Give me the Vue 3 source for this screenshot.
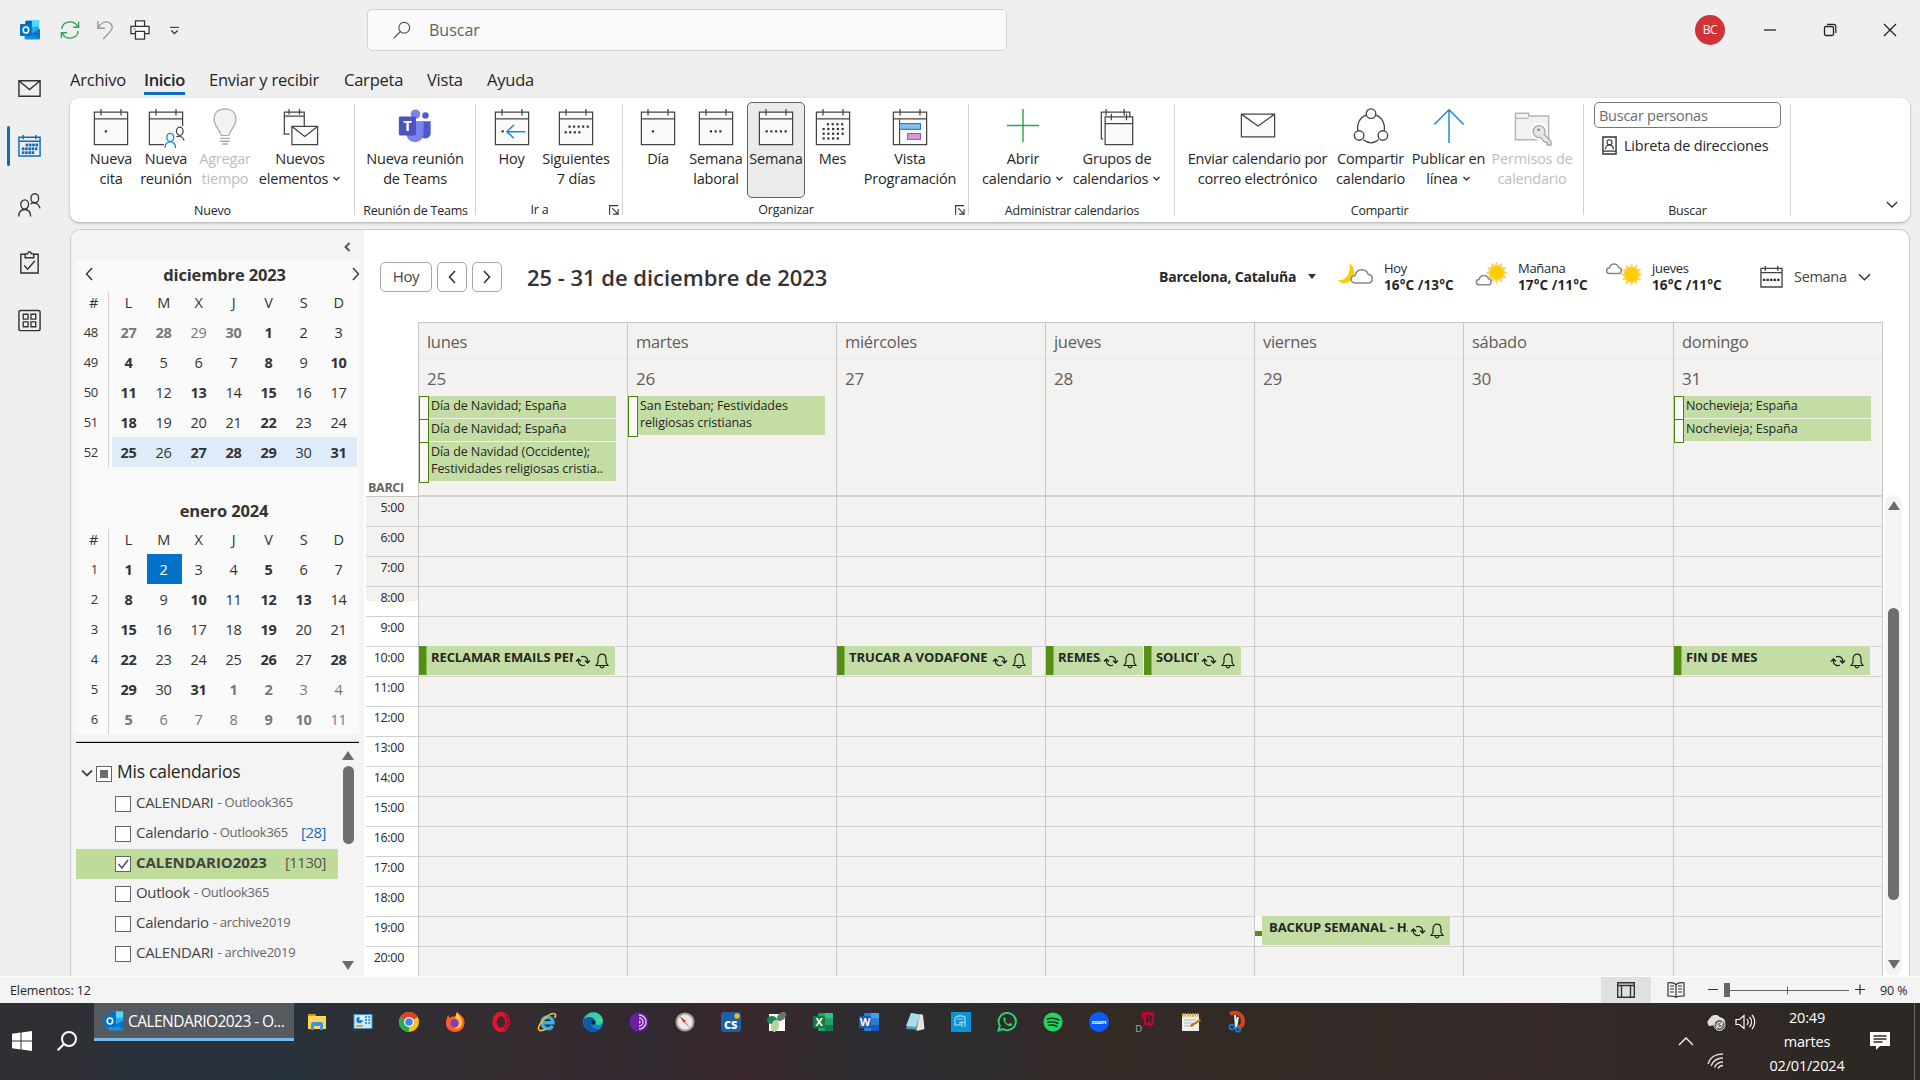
<template>
  <div class="screen">
    <header class="titlebar">
      <div class="quick">
        <svg class="q-logo" viewBox="0 0 22 22" v-html="icons.outlook"></svg>
        <svg class="q-sync" viewBox="0 0 22 22" v-html="icons.sync"></svg>
        <svg class="q-undo" viewBox="0 0 20 22" v-html="icons.undo"></svg>
        <svg class="q-print" viewBox="0 0 22 22" v-html="icons.print"></svg>
        <svg class="q-more" viewBox="0 0 10 10" v-html="icons.more"></svg>
      </div>
      <div class="search">
        <svg viewBox="0 0 20 20" v-html="icons.search"></svg>
        <span>Buscar</span>
      </div>
      <div class="window">
        <span class="avatar">BC</span>
        <svg v-for="w in ['min', 'restore', 'close']" :key="w" viewBox="0 0 14 14" v-html="icons[w]"></svg>
      </div>
    </header>

    <div class="body">
      <nav class="rail">
        <div v-for="r in rail" :key="r" class="rail-item" :class="{ active: r === 'railCal' }">
          <svg viewBox="0 0 26 26" v-html="icons[r]"></svg>
        </div>
      </nav>

      <div class="content">
        <div class="tabs">
          <span v-for="t in tabs" :key="t.name" :class="{ active: t.active }" :style="{ width: t.w + 'px' }">{{ t.name }}</span>
        </div>

        <div class="ribbon">
          <section v-for="g in groups" :key="g.label" class="group" :style="{ width: g.w + 'px' }">
            <div class="items" :style="{ paddingLeft: g.pad + 'px' }">
              <div
                v-for="b in g.items"
                :key="b.icon"
                class="rbtn"
                :class="{ on: b.on, off: b.off }"
                :style="{ width: b.w + 'px' }"
              >
                <svg viewBox="0 0 40 40" v-html="icons[b.icon]"></svg>
                <span>{{ b.l1 }}</span>
                <span v-if="b.l2">{{ b.l2 }}<svg v-if="b.drop" class="drop" viewBox="0 0 8 6" v-html="icons.drop"></svg></span>
              </div>
            </div>
            <div class="glabel" :class="{ shifted: g.launcher }">{{ g.label }}</div>
            <svg v-if="g.launcher" class="launcher" viewBox="0 0 11 11" v-html="icons.launcher"></svg>
          </section>
          <section class="group find">
            <div class="people">Buscar personas</div>
            <div class="book"><svg viewBox="0 0 16 20" v-html="icons.address"></svg><span>Libreta de direcciones</span></div>
            <div class="glabel">Buscar</div>
          </section>
          <svg class="collapse" viewBox="0 0 14 8" v-html="icons.chevDown"></svg>
        </div>

        <main class="panel">
          <aside class="side">
            <div class="side-top"><svg viewBox="0 0 8 10"><path d="M6.500 1L2.500 5l4 4" fill="none" stroke="#555" stroke-width="2" /></svg></div>
            <div class="minis">
              <div v-for="(m, mi) in months" :key="m.title" class="mini" :class="'m' + mi">
                <div class="mtitle">
                  <svg v-if="!mi" viewBox="0 0 8 14"><path d="M7 1L1.500 7 7 13" fill="none" stroke="#333" stroke-width="1.400" /></svg>
                  <b>{{ m.title }}</b>
                  <svg v-if="!mi" viewBox="0 0 8 14"><path d="M2 1l5.500 6L2 13" fill="none" stroke="#333" stroke-width="1.400" /></svg>
                </div>
                <div class="mrow mhead">
                  <i>#</i><span v-for="d in 'LMXJVSD'" :key="d">{{ d }}</span>
                </div>
                <div v-for="(w, wi) in m.weeks" :key="wi" class="mrow" :class="{ sel: w.sel }">
                  <i>{{ w.n }}</i>
                  <span v-for="(d, di) in w.days" :key="di" :class="dayClass(d)">{{ d.replace(/[*~!]/g, '') }}</span>
                </div>
              </div>
            </div>
            <div class="mycals">
              <div class="tree">
                <div class="root">
                  <svg viewBox="0 0 12 8"><path d="M1 1.500l5 5 5-5" fill="none" stroke="#444" stroke-width="1.800" /></svg>
                  <i class="box mixed"></i>
                  <span>Mis calendarios</span>
                </div>
                <div v-for="(c, ci) in calendars" :key="ci" class="cal" :class="{ chosen: c.chosen }">
                  <i class="box"><svg v-if="c.chosen" viewBox="0 0 14 14"><path d="M2.500 7l3.500 4 6-8" fill="none" stroke="#555" stroke-width="1.600" /></svg></i>
                  <span class="cname">{{ c.name }}</span>
                  <span v-if="c.src" class="csrc">- {{ c.src }}</span>
                  <span v-if="c.count" class="ccount">[{{ c.count }}]</span>
                </div>
              </div>
              <div class="sbar small"><i class="up"></i><b></b><i class="down"></i></div>
            </div>
          </aside>

          <div class="week">
            <div class="whead">
              <span class="btn today">Hoy</span>
              <span class="btn"><svg viewBox="0 0 8 14"><path d="M7 1L1.500 7 7 13" fill="none" stroke="#333" stroke-width="1.600" /></svg></span>
              <span class="btn"><svg viewBox="0 0 8 14"><path d="M1 1l5.500 6L1 13" fill="none" stroke="#333" stroke-width="1.600" /></svg></span>
              <h1>25 - 31 de diciembre de 2023</h1>
              <b class="city">Barcelona, Cataluña</b>
              <i class="caret"></i>
              <div v-for="f in forecast" :key="f.day" class="fc">
                <svg viewBox="0 0 40 28" v-html="icons[f.icon]"></svg>
                <div><span>{{ f.day }}</span><b>{{ f.temp }}</b></div>
              </div>
              <div class="viewsel">
                <svg class="vcal" viewBox="0 0 24 24" v-html="icons.viewCal"></svg>
                <span>Semana</span>
                <svg class="vdown" viewBox="0 0 14 8" v-html="icons.chevDown"></svg>
              </div>
            </div>

            <div class="calendar">
              <div class="gutter">
                <div class="tz">BARCI</div>
                <div v-for="h in hours" :key="h" class="hour" :class="{ night: h < 8, half: h === 8 }">{{ h }}:00</div>
              </div>
              <div class="days">
                <div v-for="d in days" :key="d.num" class="day">
                  <div class="dname">{{ d.name }}</div>
                  <div class="dall">
                    <div class="dnum">{{ d.num }}</div>
                    <div v-for="(a, ai) in d.allday" :key="ai" class="allday"><span v-for="line in a" :key="line">{{ line }}</span></div>
                  </div>
                  <div class="slots">
                    <div v-for="h in hours" :key="h" class="slot"></div>
                    <div
                      v-for="e in d.events"
                      :key="e.text"
                      class="event"
                      :class="{ tentative: e.short }"
                      :style="{ top: (e.at - 5) * 30 - 1 + 'px', left: e.left + 'px', width: e.w + 'px' }"
                    >
                      <b :style="{ width: e.tw + 'px' }">{{ e.text }}</b>
                      <svg class="rec" viewBox="0 0 14 14" v-html="icons.recur"></svg>
                      <svg class="bell" viewBox="0 0 14 16" v-html="icons.bell"></svg>
                    </div>
                  </div>
                </div>
              </div>
              <div class="sbar big"><i class="up"></i><b></b><i class="down"></i></div>
            </div>
          </div>
        </main>
      </div>
    </div>

    <div class="status">
      <span class="count">Elementos: 12</span>
      <span class="vbtn on"><svg viewBox="0 0 18 16" v-html="icons.normalView"></svg></span>
      <span class="vbtn"><svg viewBox="0 0 18 16" v-html="icons.readView"></svg></span>
      <svg class="zoom" viewBox="0 0 156 18" v-html="icons.slider"></svg>
      <span class="pct">90 %</span>
    </div>

    <footer class="taskbar">
      <svg class="start" viewBox="0 0 20 20" v-html="icons.windows"></svg>
      <svg class="tsearch" viewBox="0 0 20 20" v-html="icons.tsearch"></svg>
      <div class="apps">
        <div class="running"><svg viewBox="0 0 22 22" v-html="icons.outlook"></svg><span>CALENDARIO2023 - O...</span></div>
        <div v-for="a in apps" :key="a" class="app"><svg viewBox="0 0 20 20" v-html="icons[a]"></svg></div>
      </div>
      <svg class="tchev" viewBox="0 0 16 9"><path d="M1 8l7-7 7 7" fill="none" stroke="#fff" stroke-width="1.300" /></svg>
      <div class="tray">
        <svg viewBox="0 0 20 20" v-html="icons.cloud"></svg>
        <svg viewBox="0 0 20 20" v-html="icons.speaker"></svg>
        <svg viewBox="0 0 20 20" v-html="icons.wifi"></svg>
      </div>
      <div class="clock"><span>20:49</span><span>martes</span><span>02/01/2024</span></div>
      <svg class="notif" viewBox="0 0 22 20" v-html="icons.notif"></svg>
      <i class="peek"></i>
    </footer>
  </div>
</template>

<script setup>
// calendar page used by most ribbon icons
const page = '<path d="M2.500 5.500h35v34h-35z" fill="#fafafa"/><path d="M2.500 5.500h35v34h-35zM2.500 12.500h35M9.500 2v7M30.500 2v7" fill="none" stroke="#444" stroke-width="1.300"/>'

const dots = (list) => list.map(([x, y]) => `<rect x="${x}" y="${y}" width="2.300" height="2.300" fill="#333"/>`).join('')
const row = (n, x, y, step = 5) => Array.from({ length: n }, (_, i) => [x + i * step, y])

const person = (x, y, s, c) => `<g transform="translate(${x} ${y}) scale(${s})" fill="none" stroke="${c}" stroke-width="${1.4 / s}"><ellipse cx="0" cy="0" rx="4.200" ry="5"/><path d="M-6.500 13c0-5 2.500-7.500 6.500-7.500s6.500 2.500 6.500 7.500"/></g>`

const office = (dark, mid, light, letter) => `<rect x="5" y="1" width="15" height="18" rx="1" fill="${mid}"/><path d="M12 1h7a1 1 0 0 1 1 1v4h-8z" fill="${light}"/><path d="M12 13h8v5a1 1 0 0 1-1 1h-7z" fill="${dark}"/><rect x="0" y="4" width="12" height="12" rx="1" fill="${dark}"/><text x="6" y="14" font-size="11" font-weight="700" text-anchor="middle" fill="#fff">${letter}</text>`

const sun = (cx, cy) => {
  const pts = Array.from({ length: 24 }, (_, i) => {
    const r = i % 2 ? 8 : 12
    const a = (i * Math.PI) / 12
    return `${(cx + r * Math.cos(a)).toFixed(1)},${(cy + r * Math.sin(a)).toFixed(1)}`
  }).join(' ')
  return `<polygon points="${pts}" fill="#f8d568"/><circle cx="${cx}" cy="${cy}" r="7.300" fill="#fc0"/>`
}
const puff = (x, y, s) => `<path transform="translate(${x} ${y}) scale(${s})" d="M5 14a4 4 0 0 1 0-8C6 2 9 0 12 0s6 2 7 5c5 0 6 9 0 9z" fill="#fff" stroke="#888" stroke-width="${1.6 / s}"/>`

const icons = {
  outlook: '<rect x="6" y="0.500" width="15" height="15" rx="1" fill="#28a8ea"/><path d="M13 .5h8v7h-8z" fill="#50d9ff"/><path d="M6 1h7v7H6z" fill="#0364b8"/><path d="M5 10l8 5 9-5v10a1.500 1.500 0 0 1-1.500 1.500h-14A1.500 1.500 0 0 1 5 20z" fill="#1490df"/><path d="M22 10v10.500L12 15z" fill="#0a5ca8" opacity=".55"/><rect x="0" y="4.500" width="13" height="13" rx="1" fill="#0072c6"/><ellipse cx="6.500" cy="11" rx="3" ry="3.300" fill="none" stroke="#fff" stroke-width="1.800"/>',
  sync: '<path d="M2 10C2 5 6 2 11 2c4 0 7 2 8.500 5.500M20 12c0 5-4 8-9 8-4 0-7-2-8.500-5.500M20.500 2v6h-6M1.500 20v-6h6" fill="none" stroke="#2ea44f" stroke-width="1.500"/>',
  undo: '<path d="M2 1v8h8M2 9C5 3 10 1 14 2.500c5 2 5 7 2 10L8 21" fill="none" stroke="#9a9a9a" stroke-width="1.500"/>',
  print: '<path d="M6 7V1h10v6M6 15H1V7h20v8h-5M6 12.500h10V21H6z" fill="#fafafa" stroke="#333" stroke-width="1.400"/><path d="M4 10h2" stroke="#333"/>',
  more: '<path d="M0 1.500h10" stroke="#333" stroke-width="1.200"/><path d="M1.500 5L5 8.500 8.500 5" fill="none" stroke="#333" stroke-width="1.400"/>',
  search: '<circle cx="12.500" cy="7.500" r="6" fill="none" stroke="#555" stroke-width="1.300"/><path d="M8 12l-7 7" stroke="#555" stroke-width="1.400"/>',
  min: '<path d="M1 7h12" stroke="#222" stroke-width="1.300"/>',
  restore: '<rect x="1.500" y="3.500" width="9" height="9" rx="1.500" fill="none" stroke="#222" stroke-width="1.300"/><path d="M4 1.300h6.500a2.300 2.300 0 0 1 2.300 2.300V10" fill="none" stroke="#222" stroke-width="1.200"/>',
  close: '<path d="M1 1l12 12M13 1L1 13" stroke="#222" stroke-width="1.300"/>',
  railMail: '<path d="M2 5h22v16H2zM2 5l11 9 11-9" fill="none" stroke="#333" stroke-width="1.500"/>',
  railCal: '<path d="M2 4.500h22V24H2zM2 8.500h22M6.500 2v4.500M19.500 2v4.500" fill="none" stroke="#0f6cbd" stroke-width="1.500"/>' + [...row(4, 9, 11, 3.4), ...row(5, 5, 15, 3.4), ...row(4, 5, 19, 3.4)].map(([x, y]) => `<rect x="${x}" y="${y}" width="2.700" height="2.900" fill="#0f6cbd"/>`).join(''),
  railPeople: person(8, 13, 0.95, '#333') + '<g fill="none" stroke="#333" stroke-width="1.400"><ellipse cx="18.500" cy="6.500" rx="4" ry="4.700"/><path d="M14 12.500c2-1.800 8-2 10 4.500"/></g>',
  railTask: '<path d="M8 4.500H4V24h18V4.500h-4M8.500 8V4h2.500c.5-3 3.500-3 4 0h2.500v4z" fill="none" stroke="#333" stroke-width="1.500"/><path d="M7.500 16l3.500 4 7.500-8.500" fill="none" stroke="#333" stroke-width="1.500"/>',
  railApps: '<rect x="2" y="2.500" width="22" height="21" rx="2" fill="none" stroke="#333" stroke-width="1.500"/><path d="M6.500 6.500h5v5h-5zM14.500 6.500h5v5h-5zM6.500 14.500h5v5h-5zM14.500 14.500h5v5h-5z" fill="none" stroke="#333" stroke-width="1.400"/>',
  cita: page + dots([[13.5, 24.5]]),
  reunion: '<path d="M2.500 5.500h35V20L20 39.500H2.500z" fill="#fafafa"/><path d="M18 39.500H2.500v-34h35V20M2.500 12.500h35M9.500 2v7M30.500 2v7" fill="none" stroke="#444" stroke-width="1.300"/>' + person(24.5, 32, 0.85, '#1a86d0') + '<g fill="none" stroke="#444" stroke-width="1.300"><ellipse cx="34.500" cy="25.500" rx="3.500" ry="4.300"/><path d="M31 31.500c3-1.500 7-1 8 4"/></g>',
  tiempo: '<path d="M16 30C15 24 8.500 21 8.500 13 8.500 6 13 2 20 2s11.500 4 11.500 11c0 8-6.500 11-7.500 17z" fill="#f3f2f1" stroke="#aaa" stroke-width="1.300"/><path d="M15 33h10M15 36h10M17 39h6" stroke="#aaa" stroke-width="1.500"/>',
  elementos: '<path d="M9 28.500H3.500v-23h21V20M3.500 9.500h21M8.500 2v6M19.500 2v6" fill="#fafafa" stroke="#444" stroke-width="1.300"/><path d="M11.500 20.500h27v19h-27zM11.500 20.500L25 31l13.500-10.500" fill="#fafafa" stroke="#444" stroke-width="1.300"/>',
  teams: '<circle cx="20.500" cy="7.500" r="5" fill="#7b83eb"/><circle cx="31" cy="9" r="3.400" fill="#5059c9"/><path d="M26 15h10.500v12c0 6-7 8-10.500 4z" fill="#5059c9"/><path d="M11 15h18v13c0 12-18 12-18 0z" fill="#7b83eb"/><rect x="3" y="10" width="18" height="20" rx="1.500" fill="#4b53bc"/><text x="12" y="25.500" font-size="15.500" font-weight="700" text-anchor="middle" fill="#fff">T</text>',
  hoy: page + dots([[9, 24.5]]) + '<path d="M34 26H15M22 19l-7.500 7 7.500 7" fill="none" stroke="#1a86d0" stroke-width="1.500"/>',
  siguientes: page + dots([...row(5, 12, 19.5, 4.8), ...row(4, 8, 25.5, 4.8)]),
  laboral: page + dots(row(3, 13.5, 24.5, 5)),
  semana: page + dots(row(5, 9, 24.5, 5)),
  mes: page + dots([...row(4, 13.5, 17, 5), ...row(5, 9, 22, 5), ...row(5, 9, 27, 5), ...row(4, 9, 32, 5)]),
  programacion: page + '<path d="M9 12.500v27" stroke="#444" stroke-width="1.200"/><rect x="9" y="17.500" width="22" height="6" fill="#83beec" stroke="#0f6cbd"/><rect x="17.500" y="28" width="13.500" height="6" fill="#d59ed7" stroke="#9b3fa5"/>',
  abrir: '<path d="M20 2v35M3 19.500h34" stroke="#2ea44f" stroke-width="1.500"/>',
  grupos: '<path d="M5.500 33.500h-2v-28h30v5M8.500 2v7M27.500 2v7" fill="none" stroke="#444" stroke-width="1.300"/><path d="M7.500 10.500h29v29h-29z" fill="#fafafa"/><path d="M7.500 10.500h29v29h-29zM7.500 17.500h29M14 7v7M30 7v7" fill="none" stroke="#444" stroke-width="1.300"/>',
  enviar: '<path d="M2.500 7.500h35v24h-35zM2.500 7.500L20 20 37.500 7.500" fill="#fafafa" stroke="#444" stroke-width="1.300"/>',
  compartir: '<g fill="none" stroke="#444" stroke-width="1.400"><path d="M15 8.500C8 11 5 18 6 25M25 8.500C32 11 35 18 34 25M12 34.500c5 4 11 4 16 0"/><circle cx="20" cy="7" r="5"/><circle cx="7.500" cy="30" r="5"/><circle cx="32.500" cy="30" r="5"/></g>',
  publicar: '<path d="M20 38V3M4.500 18.500L20 3l15.500 15.500" fill="none" stroke="#1a86d0" stroke-width="1.500"/>',
  permisos: '<path d="M2.500 6.500h14v3h21v25h-35zM2.500 12h14" fill="#f3f2f1" stroke="#b5b5b5" stroke-width="1.500"/><path d="M24 20a6.300 6.300 0 1 1 5 11l9 8h-6l-6-7a6.300 6.300 0 0 1-2-12z" fill="#f3f2f1" stroke="#fff" stroke-width="4"/><path d="M33 29l7 7v4h-4v-3h-3l-4-5a6.300 6.300 0 1 1 4-3z" fill="#e5e5e5" stroke="#a5a5a5" stroke-width="1.400"/><circle cx="27" cy="24" r="1.400" fill="#888"/>',
  drop: '<path d="M1 1l3 3 3-3" fill="none" stroke="#333" stroke-width="1.400"/>',
  launcher: '<path d="M10 .7H.7v10M3.500 3.500l6 6M10 4.500V10H4.500" fill="none" stroke="#333" stroke-width="1.200"/>',
  address: '<path d="M1 1h14v18H1zM1 16h14" fill="none" stroke="#333" stroke-width="1.500"/><circle cx="8" cy="6.500" r="2.700" fill="none" stroke="#333" stroke-width="1.200"/><path d="M3.800 14c0-6 8.400-6 8.400 0" fill="none" stroke="#333" stroke-width="1.200"/>',
  chevDown: '<path d="M1 1l6 6 6-6" fill="none" stroke="#333" stroke-width="1.500"/>',
  night: '<path d="M13 1c8 5 7 20-5 21-3 .3-6-1-7-3 9 1 14-8 12-18z" fill="#fc0"/>' + puff(14, 8, 1),
  morning: sun(27, 11) + puff(5, 14, 0.7),
  sunny: sun(28, 13) + puff(1, 2, 0.7),
  viewCal: '<path d="M1 3.500h22V23H1zM1 8h22M5.500 1v5M18.500 1v5" fill="none" stroke="#444" stroke-width="1.400"/><path d="M3 15.500h18" stroke="#333" stroke-width="2.500" stroke-dasharray="2.600 1.100"/>',
  recur: '<path d="M11.500 8V6c0-3-4-4.500-6.500-3M2.500 6v2c0 3 4 4.500 6.500 3M9 6.500L11.500 9 14 6.500M0 7.500L2.500 5 5 7.500" fill="none" stroke="#222" stroke-width="1.300"/>',
  bell: '<path d="M1 12.500l2-3V6c0-6.500 8-6.500 8 0v3.500l2 3zM5 13c.5 2.500 3.500 2.500 4 0" fill="none" stroke="#222" stroke-width="1.200"/>',
  normalView: '<path d="M.7.7h16.600v14.600H.7zM.7 3.500h16.600M4.500 3.500v12M13.500 3.500v12" fill="none" stroke="#333" stroke-width="1.400"/>',
  readView: '<path d="M9 2.500C7 .5 4 .5 1 .8v13c3 0 6 0 8 1.500 2-1.500 5-1.500 8-1.500V.8c-3-.3-6-.3-8 1.700zV15M3 4h4M3 7h4M3 10h4M11 4h4M11 7h4M11 10h4" fill="none" stroke="#333" stroke-width="1.200"/>',
  slider: '<path d="M0 8.500h10M147 8.500h10M152 3.500v10" stroke="#333" stroke-width="1.200"/><path d="M18 9.500h123M79.500 5.500v8" stroke="#666" stroke-width="1"/><rect x="16" y="2" width="6" height="14" fill="#666"/>',
  windows: '<path d="M0 2.800l8.500-1.200v8H0zM9.500 1.500L20 0v9.600H9.500zM0 10.500h8.500v8L0 17.300zM9.500 10.500H20V20L9.500 18.600z" fill="#fff"/>',
  tsearch: '<circle cx="12" cy="8" r="7" fill="none" stroke="#fff" stroke-width="2"/><path d="M7 13l-6.300 6.300" stroke="#fff" stroke-width="2.200"/>',
  explorer: '<path d="M1 2h7l2 3H1z" fill="#d99a1c"/><path d="M1 4h18v13H1z" fill="#ffd65c"/><path d="M4 18v-6a2 2 0 0 1 2-2h8a2 2 0 0 1 2 2v6h-3v-4H7v4z" fill="#3f96e0"/>',
  control: '<rect x="1" y="2.500" width="18" height="14" fill="#cdeaff" stroke="#3d94d1"/><circle cx="6.500" cy="8" r="3.200" fill="#1f7fd0"/><path d="M6.500 8V4.500H10V8z" fill="#fff"/><path d="M3 14h7" stroke="#e2a23a" stroke-width="2"/><path d="M12 5h6M12 8h6M12 11h6" stroke="#2277bb" stroke-width="1.700" stroke-dasharray="2 1.200"/>',
  chrome: '<circle cx="10" cy="10" r="10" fill="#fbc116"/><path d="M10 10L1.300 5A10 10 0 0 1 18.700 5z" fill="#e33b2e"/><path d="M10 10L1.300 5A10 10 0 0 0 10 20z" fill="#2da94f"/><circle cx="10" cy="10" r="5" fill="#fff"/><circle cx="10" cy="10" r="3.800" fill="#4285f4"/>',
  firefox: '<path d="M3 3l2 3 3-2 2 1 2-5c4 3 8 6 7.500 11C19 17 15 20 10 20S1 16.500 1 11c0-3 1-5 2-8z" fill="#ff5a36"/><path d="M12 0c1 3 6 6 5 12-1 4-5 6-8 4 6 0 6-8 1-10z" fill="#ffcb2e"/><circle cx="9.500" cy="11" r="4" fill="#7c3fbf"/>',
  opera: '<ellipse cx="10" cy="10" rx="6.500" ry="8" fill="none" stroke="#e3122d" stroke-width="4.500"/><path d="M12 2c5 4 5 12 0 16 7-1 8-15 0-16z" fill="#a8041b"/>',
  ie: '<path d="M15.500 14c-3 4.500-10.500 3-10.500-4 0-6.500 11-6.500 11 .8H6" fill="none" stroke="#35b3ee" stroke-width="3.400"/><path d="M2 18C-1 14 13-1 18 2c1 1 .5 3-.5 4M2 18c2 1.500 5 0 7-1" fill="none" stroke="#f4bb21" stroke-width="1.700"/>',
  edge: '<circle cx="10" cy="10" r="10" fill="#1282d5"/><path d="M1 7C4-2 19-2 20 9c0 4-5 5-8 3 2-5-5-8-11-5z" fill="#3ad0a0"/><path d="M1 7c5-4 11-1 11 2-2-1-4 0-4 3 0 4 5 6 9 5-6 6-17 2-16-8z" fill="#0c59a4"/><circle cx="10.500" cy="10.500" r="2.200" fill="#16283a"/>',
  tor: '<circle cx="10" cy="10" r="9.500" fill="#6b1fa3"/><path d="M10 3a7 7 0 0 1 0 14M10 6a4 4 0 0 1 0 8M10 9a1 1 0 0 1 0 2" fill="none" stroke="#e4c6f5" stroke-width="1.400"/>',
  safari: '<circle cx="10" cy="10" r="8.500" fill="#eceae6" stroke="#a3a19d" stroke-width="2"/><path d="M4.500 4L11 9l-2 2z" fill="#d22"/><path d="M15 16.500L9 11l2-2z" fill="#b5b5b5"/>',
  cs: '<rect width="20" height="20" rx="3" fill="#1b62a8"/><circle cx="16" cy="4" r="2.700" fill="#f8b51c"/><text x="9.500" y="16.500" font-size="11" font-weight="800" text-anchor="middle" fill="#fff">CS</text>',
  plant: '<rect x="2" y="2" width="16" height="17" fill="#fff"/><ellipse cx="5" cy="8" rx="5" ry="4" fill="#168a5b"/><ellipse cx="14.500" cy="4.500" rx="5.500" ry="3.500" transform="rotate(-45 14.500 4.500)" fill="#66796c"/><ellipse cx="8" cy="14" rx="4" ry="6" transform="rotate(15 8 14)" fill="#b8d39a"/>',
  excel: office('#107c41', '#21a366', '#33c481', 'X'),
  word: office('#185abd', '#2b7cd3', '#41a5ee', 'W'),
  notes: '<path d="M6 1l12 2-1 15-16-1z" fill="#5f93a6"/><path d="M6 1l9 1.500L11 15 1 14z" fill="#a9dcea"/><path d="M15 2l3 1 1.500 14-8 2z" fill="#e9e4d8"/>',
  printer3d: '<rect width="20" height="20" fill="#0a94d6"/><path d="M4 10V7c0-3.500 9-4.500 10-1v9M4 7v6h5v-3h5v5M11 15v-5M6 7h6" fill="none" stroke="#a7dbf5" stroke-width="1.200"/>',
  whatsapp: '<path d="M1.500 18.500l1.300-4.700a8.600 8.600 0 1 1 3.400 3.300z" fill="none" stroke="#25d366" stroke-width="2"/><path d="M6.500 5.500c-1.500 3 3 9 7 8.800 1.500-.3 2-2 1.500-2.300l-2-1-1.300 1.300C9.500 11.500 8.500 10 8 8.800l1-1.300-1-2z" fill="#25d366"/>',
  spotify: '<circle cx="10" cy="10" r="9.500" fill="#1ed760"/><path d="M4.500 7c4-1.200 8-.7 11.500 1M5 10.300c3.500-1 7-.5 9.700 1M5.700 13.300c3-.7 5.500-.3 8 1" fill="none" stroke="#1c2620" stroke-width="1.600" stroke-linecap="round"/>',
  zoomApp: '<circle cx="10" cy="10" r="10" fill="#0b5cff"/><text x="10" y="12" font-size="5.800" font-weight="700" text-anchor="middle" fill="#fff">zoom</text>',
  dr: '<path d="M7 0h12v13h-3v4l-3-4H9V7H7z" fill="#b6082c"/><text x="13.500" y="11" font-size="11" font-weight="700" text-anchor="middle" fill="#30262a">R</text><text x="3.500" y="19.500" font-size="9.500" text-anchor="middle" fill="#aaa">D</text>',
  notepad: '<rect x="1" y="2" width="17" height="17" fill="#f0efeb"/><path d="M1 3h17" stroke="#d4a33a" stroke-width="3.500" stroke-dasharray="1.500 1"/><path d="M3 8h12M3 11h9M3 14h10" stroke="#b5b5b5"/><path d="M19.500 8l-10 6" stroke="#b97725" stroke-width="2.200"/>',
  snip: '<path d="M3 2c6-3 13 0 13 7 0 4-2 6-5 6" fill="none" stroke="#d2431d" stroke-width="4"/><path d="M8 3l1 12M11 5l-2 11" stroke="#eee" stroke-width="2"/><circle cx="5" cy="15" r="2.400" fill="none" stroke="#1978d4" stroke-width="1.800"/><circle cx="11" cy="17.500" r="2.200" fill="none" stroke="#1978d4" stroke-width="1.800"/>',
  cloud: '<path d="M4 14a4 4 0 0 1 0-7c1-4 8-5 10-1 4 0 5 3 4.500 5" fill="#ddd" stroke="#eee"/><circle cx="13.500" cy="13" r="5.500" fill="#6b6b6b" stroke="#eee" stroke-width=".8"/><path d="M10.800 13a2.700 2.700 0 0 1 5-1.200M16.200 9.800v2.500h-2.500M16.200 13.200a2.700 2.700 0 0 1-5 1.200M10.800 16.200v-2.400h2.400" fill="none" stroke="#fff" stroke-width="1"/>',
  speaker: '<path d="M1 7.500h3.500L9 3.500v13l-4.500-4H1zM12 7c1.500 2 1.500 4 0 6M14.500 5c2.700 3 2.700 7 0 10M17 3c3.600 4 3.600 10 0 14" fill="none" stroke="#fff" stroke-width="1.200"/>',
  wifi: '<path d="M2 13C4 6 9 3 17 3M5 15c2-5 5-8 12-8M8.500 16.500c1.500-3.500 4-5.500 8.500-5.500M12 17.500c1-2 2.500-3 5-3" fill="none" stroke="#ddd" stroke-width="1.400"/>',
  notif: '<path d="M1 1h20v14H11l-4 4v-4H1z" fill="#fff"/><path d="M4.500 5h13M4.500 8h13M4.500 11h9" stroke="#332b28" stroke-width="1.300"/>',
}

const rail = ['railMail', 'railCal', 'railPeople', 'railTask', 'railApps']

const tabs = [
  { name: 'Archivo', w: 74 },
  { name: 'Inicio', w: 65, active: true },
  { name: 'Enviar y recibir', w: 135 },
  { name: 'Carpeta', w: 83 },
  { name: 'Vista', w: 60 },
  { name: 'Ayuda', w: 60 },
]

const groups = [
  { label: 'Nuevo', w: 285, pad: 13, items: [
    { icon: 'cita', l1: 'Nueva', l2: 'cita', w: 56 },
    { icon: 'reunion', l1: 'Nueva', l2: 'reunión', w: 54 },
    { icon: 'tiempo', l1: 'Agregar', l2: 'tiempo', w: 64, off: true },
    { icon: 'elementos', l1: 'Nuevos', l2: 'elementos', w: 86, drop: true },
  ] },
  { label: 'Reunión de Teams', w: 121, pad: 0, items: [{ icon: 'teams', l1: 'Nueva reunión', l2: 'de Teams', w: 120 }] },
  { label: 'Ir a', w: 147, pad: 11, launcher: true, items: [
    { icon: 'hoy', l1: 'Hoy', w: 49 },
    { icon: 'siguientes', l1: 'Siguientes', l2: '7 días', w: 80 },
  ] },
  { label: 'Organizar', w: 346, pad: 8, launcher: true, items: [
    { icon: 'cita', l1: 'Día', w: 54 },
    { icon: 'laboral', l1: 'Semana', l2: 'laboral', w: 62 },
    { icon: 'semana', l1: 'Semana', w: 58, on: true },
    { icon: 'mes', l1: 'Mes', w: 55 },
    { icon: 'programacion', l1: 'Vista', l2: 'Programación', w: 100 },
  ] },
  { label: 'Administrar calendarios', w: 206, pad: 8, items: [
    { icon: 'abrir', l1: 'Abrir', l2: 'calendario', w: 92, drop: true },
    { icon: 'grupos', l1: 'Grupos de', l2: 'calendarios', w: 96, drop: true },
  ] },
  { label: 'Compartir', w: 409, pad: 7, items: [
    { icon: 'enviar', l1: 'Enviar calendario por', l2: 'correo electrónico', w: 151 },
    { icon: 'compartir', l1: 'Compartir', l2: 'calendario', w: 75 },
    { icon: 'publicar', l1: 'Publicar en', l2: 'línea', w: 81, drop: true },
    { icon: 'permisos', l1: 'Permisos de', l2: 'calendario', w: 86, off: true },
  ] },
]

// * = bold, ~ = other month, ! = today
const week = (n, days, sel) => ({ n, days: days.split(' '), sel })
const months = [
  { title: 'diciembre 2023', weeks: [
    week(48, '~*27 ~*28 ~29 ~*30 *1 2 3'),
    week(49, '*4 5 6 7 *8 9 *10'),
    week(50, '*11 12 *13 14 *15 16 17'),
    week(51, '*18 19 20 21 *22 23 24'),
    week(52, '*25 26 *27 *28 *29 30 *31', true),
  ] },
  { title: 'enero 2024', weeks: [
    week(1, '*1 !2 3 4 *5 6 7'),
    week(2, '*8 9 *10 11 *12 *13 14'),
    week(3, '*15 16 17 18 *19 20 21'),
    week(4, '*22 23 24 25 *26 27 *28'),
    week(5, '*29 30 *31 ~*1 ~*2 ~3 ~4'),
    week(6, '~*5 ~6 ~7 ~8 ~*9 ~*10 ~11'),
  ] },
]
const dayClass = (d) => ({ bold: d.includes('*'), other: d.includes('~'), now: d.includes('!') })

const calendars = [
  { name: 'CALENDARI', src: 'Outlook365' },
  { name: 'Calendario', src: 'Outlook365', count: 28 },
  { name: 'CALENDARIO2023', count: 1130, chosen: true },
  { name: 'Outlook', src: 'Outlook365' },
  { name: 'Calendario', src: 'archive2019' },
  { name: 'CALENDARI', src: 'archive2019' },
]

const forecast = [
  { day: 'Hoy', temp: '16°C /13°C', icon: 'night' },
  { day: 'Mañana', temp: '17°C /11°C', icon: 'morning' },
  { day: 'jueves', temp: '16°C /11°C', icon: 'sunny' },
]

const hours = Array.from({ length: 16 }, (_, i) => i + 5)

const days = [
  { name: 'lunes', num: 25,
    allday: [['Día de Navidad; España'], ['Día de Navidad; España'], ['Día de Navidad (Occidente);', 'Festividades religiosas cristia..']],
    events: [{ text: 'RECLAMAR EMAILS PEN', at: 10, left: 0, w: 196, tw: 142 }] },
  { name: 'martes', num: 26, allday: [['San Esteban; Festividades', 'religiosas cristianas']] },
  { name: 'miércoles', num: 27, events: [{ text: 'TRUCAR A VODAFONE', at: 10, left: 0, w: 195, tw: 141 }] },
  { name: 'jueves', num: 28, events: [
    { text: 'REMESA', at: 10, left: 0, w: 97, tw: 43 },
    { text: 'SOLICIT', at: 10, left: 98, w: 97, tw: 43 },
  ] },
  { name: 'viernes', num: 29, events: [{ text: 'BACKUP SEMANAL - H.', at: 19, left: 0, w: 195, tw: 139, short: true }] },
  { name: 'sábado', num: 30 },
  { name: 'domingo', num: 31,
    allday: [['Nochevieja; España'], ['Nochevieja; España']],
    events: [{ text: 'FIN DE MES', at: 10, left: 0, w: 196, tw: 142 }] },
]

const apps = ['explorer', 'control', 'chrome', 'firefox', 'opera', 'ie', 'edge', 'tor', 'safari', 'cs', 'plant', 'excel', 'word', 'notes', 'printer3d', 'whatsapp', 'spotify', 'zoomApp', 'dr', 'notepad', 'snip']
</script>

<style>
body {
  overflow: hidden;
}
</style>

<style scoped>
* {
  box-sizing: border-box;
}
.screen {
  width: 1920px;
  height: 1080px;
  display: flex;
  flex-direction: column;
  background: #efefef;
  font-family: "Open Sans", "Noto Sans", sans-serif;
  font-size: 15px;
  color: #262626;
  letter-spacing: -0.3px;
  white-space: nowrap;
  overflow: hidden;
}
svg {
  display: block;
  flex: none;
  overflow: visible;
}
i {
  font-style: normal;
}

/* title bar */
.titlebar {
  height: 59px;
  flex: none;
  display: flex;
  align-items: center;
}
.quick {
  width: 367px;
  padding-left: 20px;
  display: flex;
  align-items: center;
}
.q-logo { width: 20px; height: 20px; margin-right: 20px; }
.q-sync { width: 20px; height: 20px; margin-right: 16px; }
.q-undo { width: 18px; height: 20px; margin-right: 16px; }
.q-print { width: 20px; height: 20px; margin-right: 20px; }
.q-more { width: 9px; height: 9px; margin-top: 1px; }
.search {
  width: 640px;
  height: 42px;
  margin-top: 1px;
  border: 1px solid #d1d1d1;
  border-radius: 5px;
  background: #fafafa;
  display: flex;
  align-items: center;
  padding: 0 0 1px 25px;
  gap: 18px;
  font-size: 16px;
  letter-spacing: 0;
  color: #616161;
}
.search svg { width: 18px; height: 18px; }
.window {
  margin-left: auto;
  padding-right: 23px;
  display: flex;
  align-items: center;
  gap: 46px;
}
.window svg { width: 14px; height: 14px; }
.avatar {
  width: 30px;
  height: 30px;
  margin-right: -8px;
  border-radius: 50%;
  background: #d13438;
  color: #fff;
  font-size: 12px;
  line-height: 30px;
  text-align: center;
}

.body {
  height: 917px;
  flex: none;
  display: flex;
}
.rail {
  width: 58px;
  flex: none;
}
.rail-item {
  height: 58px;
  display: flex;
  align-items: center;
  padding-left: 7px;
}
.rail-item svg { width: 25px; height: 25px; margin-left: 10px; }
.rail-item.active::before {
  content: "";
  width: 3px;
  height: 40px;
  border-radius: 2px;
  background: #0f6cbd;
}
.rail-item.active svg { margin: 0 0 1px 7px; }
.content {
  width: 1852px;
  padding-left: 12px;
}

/* tabs */
.tabs {
  height: 39px;
  display: flex;
  font-size: 16.5px;
  line-height: 41px;
}
.tabs span { letter-spacing: -0.22px; }
.tabs .active {
  font-weight: 600;
  letter-spacing: -0.35px;
  background: linear-gradient(#0f6cbd, #0f6cbd) 0 33px / 41px 3px no-repeat;
}

/* ribbon */
.ribbon {
  height: 124px;
  width: 1840px;
  background: #fff;
  border-radius: 9px;
  box-shadow: 0 1px 3px rgba(0, 0, 0, 0.3);
  display: flex;
}
.group {
  flex: none;
  position: relative;
  padding-top: 4px;
  background: linear-gradient(#d1d1d1, #d1d1d1) right 6px / 1px 111px no-repeat;
}
.items {
  display: flex;
  height: 96px;
}
.rbtn {
  flex: none;
  display: flex;
  flex-direction: column;
  align-items: center;
  line-height: 20px;
  font-size: 14.5px;
  letter-spacing: -0.2px;
  padding-top: 4px;
}
.rbtn > svg {
  width: 40px;
  height: 40px;
  margin-bottom: 3px;
  padding: 1px;
}
.rbtn span { display: flex; align-items: center; }
.rbtn .drop { width: 9px; height: 6px; margin-left: 4px; }
.rbtn.off { color: #bdbdbd; }
.rbtn.on {
  height: 96px;
  padding-top: 3px;
  border: 1px solid #616161;
  border-radius: 5px;
  background: #ebebeb;
}
.glabel {
  text-align: center;
  font-size: 12.5px;
  line-height: 25px;
  letter-spacing: -0.2px;
}
.shifted {
  padding-right: 20px;
  line-height: 24px;
}
.launcher {
  position: absolute;
  right: 4px;
  bottom: 7px;
  width: 10px;
  height: 10px;
}
.find { width: 207px; }
.people {
  width: 187px;
  height: 26px;
  margin-left: 10px;
  border: 1px solid #767676;
  border-radius: 5px;
  padding-left: 4px;
  line-height: 25px;
  font-size: 14.5px;
  letter-spacing: -0.25px;
  color: #6b6b6b;
}
.book {
  display: flex;
  align-items: center;
  height: 34px;
  margin: 0 0 36px 18px;
  gap: 7px;
  font-size: 14.5px;
  letter-spacing: -0.2px;
}
.book svg { width: 15px; height: 19px; }
.collapse {
  width: 12px;
  height: 7px;
  margin: 103px 12px 0 auto;
}

/* main panel */
.panel {
  margin-top: 7px;
  width: 1840px;
  height: 747px;
  display: flex;
  border: 1px solid #c8c8c8;
  border-bottom: 0;
  border-radius: 10px 10px 0 0;
  background: #fff;
  overflow: hidden;
}
.side {
  width: 293px;
  flex: none;
  background: #f4f4f4;
  padding-left: 5px;
}
.side-top {
  height: 30px;
  display: flex;
  justify-content: flex-end;
  padding: 12px 13px 0 0;
}
.side-top svg { width: 8px; height: 10px; }
.minis {
  width: 283px;
  height: 474px;
  background: #fafafa;
  color: #333;
}
.m0 { height: 237px; }
.mtitle {
  height: 32px;
  display: flex;
  align-items: center;
  justify-content: space-between;
  padding: 0 0 4px 9px;
  font-size: 16.5px;
  letter-spacing: -0.15px;
}
.m1 .mtitle { justify-content: center; padding: 0 0 5px 13px; }
.mtitle svg { width: 8px; height: 14px; }
.mtitle b { padding-left: 5px; }
.m1 .mtitle b { padding: 0; }
.mrow {
  height: 30px;
  display: flex;
  line-height: 31px;
  font-size: 14.5px;
}
.mhead { height: 25px; line-height: 22px; }
.mrow i {
  width: 33px;
  margin-right: 3px;
  padding-right: 10px;
  text-align: right;
  border-right: 1px solid #d1d1d1;
  font-size: 13px;
}
.mhead i { font-size: 14.5px; }
.mrow span { width: 35px; padding-right: 2px; text-align: center; }
.mrow.sel span { background: #deecf9; }
.mrow .bold { font-weight: 700; }
.mrow .other { color: #777; }
.mrow .now { background: #0072c9; color: #fff; }

.mycals {
  width: 283px;
  height: 234px;
  margin-top: 8px;
  border-top: 1px solid #000;
  box-shadow: 0 -1px 0 #d0d0d0;
  display: flex;
}
.tree { width: 262px; padding-top: 15px; }
.root {
  height: 31px;
  display: flex;
  align-items: center;
  padding: 0 0 5px 5px;
  font-size: 17.5px;
  letter-spacing: -0.25px;
}
.root svg { width: 12px; height: 8px; margin: 4px 3px 0 0; }
.root span { padding-left: 5px; }
.box {
  width: 16px;
  height: 16px;
  flex: none;
  border: 1px solid #666;
  background: #fff;
  display: inline-block;
}
.root .box { margin-top: 5px; }
.mixed { background: linear-gradient(#6b6b6b, #6b6b6b) center / 8px 8px no-repeat #fff; }
.cal {
  height: 30px;
  padding: 0 0 4px 39px;
  display: flex;
  align-items: center;
  color: #444;
}
.cal .box { margin-top: 4px; }
.cname { padding-left: 5px; letter-spacing: -0.3px; }
.csrc { padding-left: 4px; font-size: 13px; color: #666; letter-spacing: -0.25px; }
.ccount { margin-left: auto; padding-right: 12px; color: #0f6cbd; letter-spacing: -0.5px; }
.chosen { background: #bfdb99; }
.chosen .cname { font-weight: 700; letter-spacing: -0.05px; }
.chosen .ccount { color: #555; }

.sbar {
  display: flex;
  flex-direction: column;
  align-items: center;
}
.sbar i { border: 6px solid transparent; border-top-width: 0; border-bottom: 9px solid #6b6b6b; }
.sbar .down { border-top: 9px solid #6b6b6b; border-bottom-width: 0; }
.sbar b { width: 11px; border-radius: 6px; background: #6e6e6e; }
.small { width: 20px; padding-top: 8px; }
.small b { height: 78px; margin: 6px 0 117px; }

/* week view */
.week { flex: 1; }
.whead {
  height: 92px;
  display: flex;
  align-items: center;
  padding: 1px 0 0 16px;
}
.btn {
  width: 30px;
  height: 30px;
  margin-right: 5px;
  border: 1px solid #a6a6a6;
  border-radius: 5px;
  display: flex;
  align-items: center;
  justify-content: center;
}
.btn svg { width: 8px; height: 14px; }
.today { width: 52px; color: #444; padding-bottom: 2px; }
h1 {
  width: 632px;
  margin: 0 0 0 20px;
  font-size: 22px;
  font-weight: 600;
  letter-spacing: -0.03px;
  color: #333;
}
.city {
  width: 138px;
  font-size: 14px;
  letter-spacing: -0.2px;
}
.caret {
  border: 4px solid transparent;
  border-top: 5px solid #333;
  border-bottom: 0;
  margin: 0 21px 0 11px;
}
.fc {
  width: 134px;
  display: flex;
  align-items: center;
}
.fc svg { width: 38px; height: 27px; margin-right: 9px; margin-top: -3px; }
.fc span, .fc b {
  display: block;
  font-size: 13px;
  line-height: 17px;
  letter-spacing: -0.3px;
}
.fc b { font-size: 13.5px; letter-spacing: 0.1px; }
.viewsel {
  display: flex;
  align-items: center;
  margin-left: 21px;
  gap: 11px;
  font-size: 14.5px;
  color: #444;
}
.vcal { width: 23px; height: 23px; }
.vdown { width: 13px; height: 8px; }

.calendar {
  display: flex;
  height: 654px;
  padding-left: 2px;
}
.gutter {
  width: 52px;
  flex: none;
}
.tz {
  height: 175px;
  padding: 157px 0 0 2px;
  font-size: 12.5px;
  font-weight: 700;
  line-height: 18px;
  color: #666;
  border-bottom: 1px solid #c8c8c8;
}
.hour {
  height: 30px;
  padding-right: 14px;
  border-bottom: 1px solid #d1d1d1;
  text-align: right;
  font-size: 12.5px;
  line-height: 22px;
  letter-spacing: -0.3px;
}
.night { background: #f3f2f1; }
.half { background: linear-gradient(#f3f2f1 14px, #fff 14px); }
.days {
  width: 1465px;
  flex: none;
  display: grid;
  grid-template-columns: 209px 209px 209px 209px 209px 210px 209px;
  border-top: 1px solid #c8c8c8;
  border-right: 1px solid #c8c8c8;
  background: #f3f2f1;
}
.day {
  border-left: 1px solid #c8c8c8;
  min-width: 0;
}
.dname {
  height: 36px;
  padding-left: 8px;
  border-bottom: 1px solid #e8e8e8;
  font-size: 16.5px;
  line-height: 37px;
  color: #605e5c;
}
.dall {
  height: 138px;
  border-bottom: 2px solid #d1d1d1;
}
.dnum {
  height: 37px;
  padding: 3px 0 0 8px;
  font-size: 17px;
  line-height: 34px;
  color: #605e5c;
}
.allday {
  width: 197px;
  margin-bottom: 1px;
  padding: 1px 0 4px 12px;
  background: linear-gradient(#c3dda4, #c3dda4) 8px 0 no-repeat;
  position: relative;
  font-size: 12.5px;
  line-height: 17px;
  letter-spacing: -0.07px;
}
.allday::before {
  content: "";
  position: absolute;
  left: 0;
  top: 0;
  width: 8px;
  height: 100%;
  border: 1px solid #498205;
  background: #fafafa;
}
.allday span { display: block; height: 17px; }
.slots { position: relative; }
.slot {
  height: 30px;
  border-bottom: 1px solid #d1d1d1;
}
.event {
  position: absolute;
  height: 29px;
  display: flex;
  padding-left: 12px;
  background: linear-gradient(90deg, #549014 7px, #8cb85b 7px, #8cb85b 8px, #c3dda4 8px);
  box-shadow: 1px 0 0 #f3f2f1;
}
.event b {
  flex: none;
  font-size: 13px;
  line-height: 22px;
  letter-spacing: -0.1px;
  overflow: hidden;
}
.rec { width: 14px; height: 14px; margin: 8px 0 0 3px; }
.bell { width: 14px; height: 16px; margin: 7px 0 0 5px; }
.event.tentative {
  padding-left: 14px;
  background: linear-gradient(#549014, #549014) 0 15px / 7px 5px no-repeat, linear-gradient(90deg, #f8f8f8 7px, #c3dda4 7px);
}
.big {
  width: 17px;
  height: 481px;
  margin: 173px 0 0 2px;
  padding-top: 6px;
  border-radius: 9px;
  background: #f4f4f4;
}
.big b { height: 292px; margin: 98px 0 60px; }

/* status bar */
.status {
  height: 27px;
  flex: none;
  display: flex;
  align-items: center;
  padding: 0 0 0 10px;
  border-top: 1px solid #fff;
  background: #f4f4f4;
  font-size: 12.5px;
  letter-spacing: -0.1px;
}
.count { width: 1591px; }
.vbtn {
  width: 50px;
  height: 26px;
  display: flex;
  align-items: center;
  justify-content: center;
}
.vbtn.on { background: #e0e0e0; }
.vbtn svg { width: 18px; height: 16px; }
.zoom { width: 156px; height: 18px; margin-left: 7px; }
.pct { margin-left: 16px; font-size: 12.5px; }

/* taskbar */
.taskbar {
  height: 77px;
  flex: none;
  display: flex;
  align-items: center;
  background: linear-gradient(90deg, #302f33 0, #302f33 70px, #28313a 130px, #28323a 300px, #302e33 370px, #342c31 520px, #30292f 660px, #3a282d 740px, #2e2d31 860px, #2c2c2f 960px, #342a27 1080px, #312a25 1250px, #352a28 1500px, #2c2823 1920px);
  color: #fff;
}
.start { width: 20px; height: 20px; margin: 0 0 2px 12px; }
.tsearch { width: 20px; height: 20px; margin: 0 0 2px 25px; }
.apps {
  display: flex;
  align-self: flex-start;
  margin-left: 17px;
}
.running {
  width: 200px;
  height: 38px;
  display: flex;
  align-items: center;
  padding-left: 10px;
  gap: 4px;
  background: #545a60;
  border-bottom: 3px solid #76b9ed;
  font-size: 15.5px;
  letter-spacing: -0.55px;
}
.running svg { width: 20px; height: 20px; }
.app {
  width: 46px;
  height: 38px;
  display: flex;
  align-items: center;
  justify-content: center;
}
.app svg { width: 20px; height: 20px; }
.tchev { width: 16px; height: 9px; margin-left: auto; }
.tray {
  width: 56px;
  margin-left: 12px;
  display: flex;
  flex-wrap: wrap;
  gap: 19px 9px;
}
.tray svg { width: 20px; height: 20px; }
.clock {
  width: 90px;
  text-align: center;
  font-size: 14.5px;
  line-height: 24px;
  letter-spacing: -0.2px;
}
.clock span { display: block; }
.notif { width: 22px; height: 20px; margin: 0 23px 1px 17px; }
.peek {
  width: 6px;
  height: 77px;
  border-left: 1px solid #6b6863;
}
</style>
